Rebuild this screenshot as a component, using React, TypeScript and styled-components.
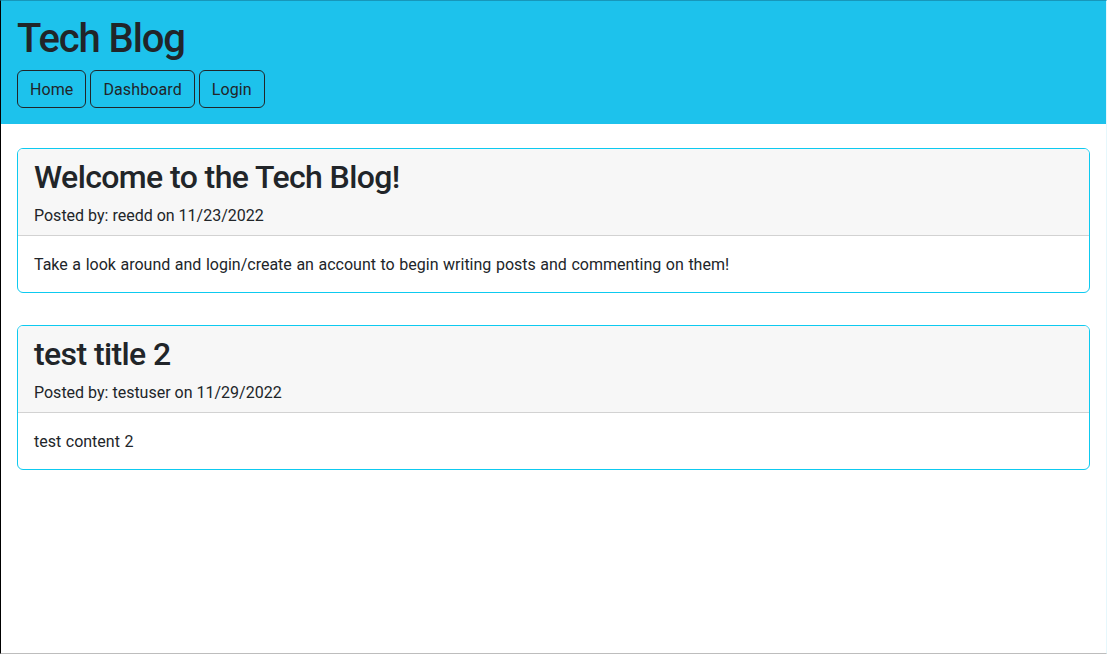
import React from "react";
import styled, { createGlobalStyle } from "styled-components";

const Global = createGlobalStyle`
  html, body { margin: 0; padding: 0; background: #fff; }
  body {
    font-family: Roboto, "Noto Sans", sans-serif;
    font-size: 16px;
    line-height: 1.5;
    color: #212529;
  }
  * { box-sizing: border-box; }
`;

const Frame = styled.div`
  height: 654px;
  border-left: 1px solid #000;
  border-top: 1px solid #1797ba;
  border-bottom: 1px solid #bdbdbd;
  border-right: 1px solid #e6f7fc;
  display: flex;
  flex-direction: column;
  overflow: hidden;
`;

const Header = styled.header`
  background: #1dc2ec;
  padding: 14px 16px 16px;
`;

const SiteTitle = styled.h1`
  margin: 0 0 7px;
  font-size: 40px;
  font-weight: 500;
  line-height: 1.2;
  letter-spacing: -1.1px;
`;

const Nav = styled.nav`
  display: flex;
  gap: 4px;
`;

const NavButton = styled.button`
  font: inherit;
  color: #212529;
  background: transparent;
  border: 1px solid #212529;
  border-radius: 6px;
  padding: 7px 12px 5px;
  line-height: 24px;
  letter-spacing: 0.1px;
  cursor: pointer;
`;

const Main = styled.main`
  padding: 24px 16px;
  display: flex;
  flex-direction: column;
  gap: 32px;
`;

const Card = styled.article`
  border: 1px solid #0dcaf0;
  border-radius: 6px;
  overflow: hidden;
`;

const CardHeader = styled.div`
  background: #f7f7f7;
  padding: 9px 16px 7px;
  border-bottom: 1px solid #d2d2d2;
`;

const PostTitle = styled.h2`
  margin: 0 0 7px;
  font-size: 32px;
  font-weight: 500;
  line-height: 38px;
  letter-spacing: -0.6px;
`;

const Meta = styled.p`
  margin: 0;
  padding-top: 1px;
`;

const CardBody = styled.div`
  padding: 17px 16px 15px;
  word-spacing: 0.6px;
`;

const posts = [
  {
    title: "Welcome to the Tech Blog!",
    author: "reedd",
    date: "11/23/2022",
    content:
      "Take a look around and login/create an account to begin writing posts and commenting on them!",
  },
  {
    title: "test title 2",
    author: "testuser",
    date: "11/29/2022",
    content: "test content 2",
  },
];

export default function App() {
  return (
    <>
      <Global />
      <Frame>
        <Header>
          <SiteTitle>Tech Blog</SiteTitle>
          <Nav>
            <NavButton>Home</NavButton>
            <NavButton>Dashboard</NavButton>
            <NavButton>Login</NavButton>
          </Nav>
        </Header>
        <Main>
          {posts.map((p) => (
            <Card key={p.title}>
              <CardHeader>
                <PostTitle>{p.title}</PostTitle>
                <Meta>
                  Posted by: {p.author} on {p.date}
                </Meta>
              </CardHeader>
              <CardBody>{p.content}</CardBody>
            </Card>
          ))}
        </Main>
      </Frame>
    </>
  );
}
